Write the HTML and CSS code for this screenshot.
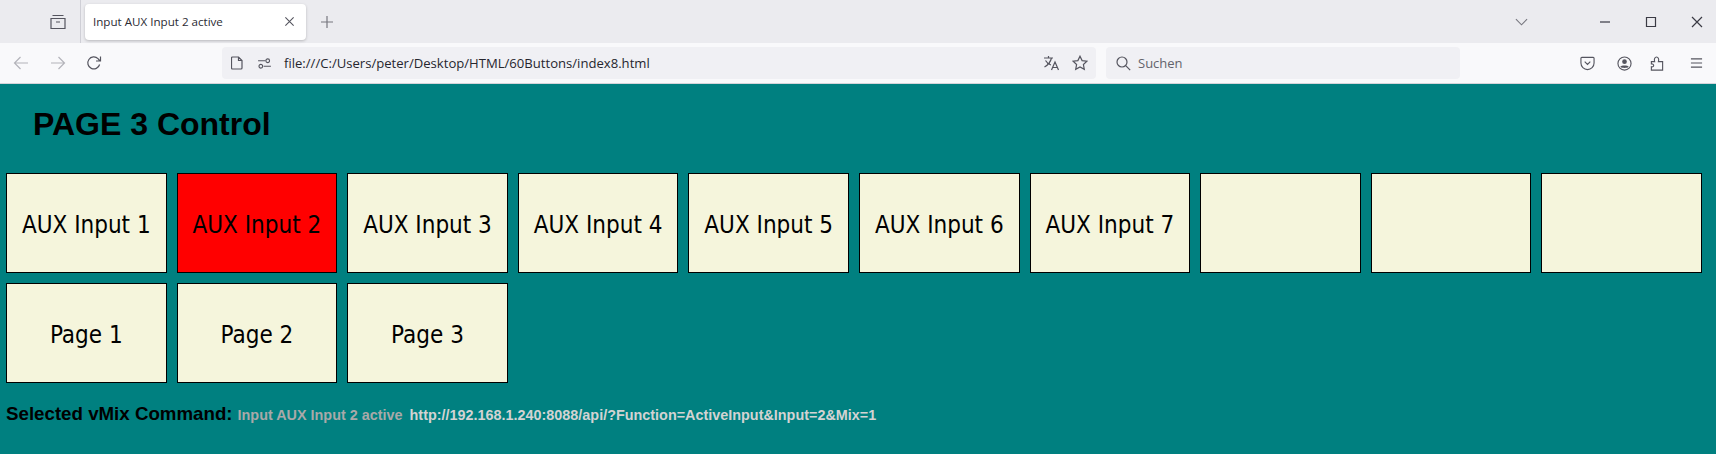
FILE: index.html
```html
<!DOCTYPE html>
<html lang="de">
<head>
<meta charset="utf-8">
<title>Input AUX Input 2 active</title>
<link rel="stylesheet" href="styles.css">
</head>
<body>
<header class="browser">
  <div class="tabstrip">
    <svg class="ico archive" viewBox="0 0 16 16"><path d="M2.5 1.5h11M1 4.5h14v10H1zM6 8h4"/></svg>
    <div class="sep"></div>
    <div class="tab">
      <span class="tab-title">Input AUX Input 2 active</span>
      <svg class="ico tab-close" viewBox="0 0 12 12"><path d="M1.5 1.5l9 9M10.5 1.5l-9 9"/></svg>
    </div>
    <svg class="ico plus" viewBox="0 0 14 14"><path d="M7 1v12M1 7h12"/></svg>
    <div class="spacer"></div>
    <svg class="ico chevron" viewBox="0 0 14 8"><path d="M1 1l6 6 6-6"/></svg>
    <svg class="ico win win-min" viewBox="0 0 12 12"><path d="M1 6h10"/></svg>
    <svg class="ico win win-max" viewBox="0 0 12 12"><path d="M1.5 1.5h9v9h-9z"/></svg>
    <svg class="ico win win-close" viewBox="0 0 12 12"><path d="M1 1l10 10M11 1L1 11"/></svg>
  </div>
  <div class="toolbar">
    <svg class="ico nav back" viewBox="0 0 16 16"><path d="M15 8H1.5M7.5 2l-6 6 6 6"/></svg>
    <svg class="ico nav forward" viewBox="0 0 16 16"><path d="M1 8h13.5M8.5 2l6 6-6 6"/></svg>
    <svg class="ico nav reload" viewBox="0 0 16 16"><path d="M13.6 9.5A6 6 0 1 1 12 3.6L14 6M14.5 1.5V6H10"/></svg>
    <div class="urlbar">
      <svg class="ico file" viewBox="0 0 12 14"><path d="M1.5 1h6l3.500 3.500v7.500a1 1 0 0 1-1 1h-8.500a1 1 0 0 1-1-1V2a1 1 0 0 1 1-1zM7.500 1v3.500H11"/></svg>
      <svg class="ico perm" viewBox="0 0 16 12"><circle cx="11.500" cy="3" r="2"/><circle cx="4" cy="9" r="2"/><path d="M1 3h8M7 9h8"/></svg>
      <span class="url">file:///C:/Users/peter/Desktop/HTML/60Buttons/index8.html</span>
      <div class="spacer"></div>
      <svg class="ico translate" viewBox="0 0 17 16"><path d="M1 3h9M5.500 1v2M8.500 3C7.500 7 5 10 1.500 12M2.500 5.500C4 8 6 9.500 8 10M8.500 15l3.500-8 3.500 8M9.700 12.500h4.800"/></svg>
      <svg class="ico star" viewBox="0 0 16 16"><path d="M8 1.200l2.100 4.400 4.800.6-3.500 3.300.9 4.800L8 12l-4.300 2.300.9-4.800L1.100 6.200l4.800-.6z"/></svg>
    </div>
    <div class="searchbar">
      <svg class="ico search" viewBox="0 0 15 15"><circle cx="6" cy="6" r="5"/><path d="M9.700 9.700l4.500 4.500"/></svg>
      <span class="search-text">Suchen</span>
    </div>
    <div class="spacer"></div>
    <svg class="ico tool pocket" viewBox="0 0 16 15"><path d="M2 1h12a1 1 0 0 1 1 1v5a7 7 0 0 1-14 0V2a1 1 0 0 1 1-1zM5 5.500L8 8.500l3-3"/></svg>
    <svg class="ico tool account" viewBox="0 0 16 16"><circle cx="8" cy="8" r="7"/><circle class="solid" cx="8" cy="6" r="2.500"/><path class="solid" d="M3.500 11.500c1-1.700 8-1.700 9 0-1 1.700-8 1.700-9 0z"/></svg>
    <svg class="ico tool puzzle" viewBox="0 0 14 16"><path d="M1 6h3.500C3.500 3 5 1 6.500 1S9.500 3 8.500 6H13v9H1v-3.500c3 .8 3.500-3.500 0-3z"/></svg>
    <svg class="ico tool menu" viewBox="0 0 14 12"><path d="M1 1.500h12M1 6h12M1 10.500h12"/></svg>
  </div>
</header>
<main class="page">
  <h1 class="heading">PAGE 3 Control</h1>
  <div class="grid">
    <button class="key">AUX Input 1</button>
    <button class="key active">AUX Input 2</button>
    <button class="key">AUX Input 3</button>
    <button class="key">AUX Input 4</button>
    <button class="key">AUX Input 5</button>
    <button class="key">AUX Input 6</button>
    <button class="key">AUX Input 7</button>
    <button class="key"></button>
    <button class="key"></button>
    <button class="key"></button>
    <button class="key">Page 1</button>
    <button class="key">Page 2</button>
    <button class="key">Page 3</button>
  </div>
  <p class="status">
    <span class="status-label">Selected vMix Command:</span>
    <span class="status-name">Input AUX Input 2 active</span>
    <span class="status-url">http://192.168.1.240:8088/api/?Function=ActiveInput&amp;Input=2&amp;Mix=1</span>
  </p>
</main>
</body>
</html>
```
FILE: styles.css
```css
* { box-sizing: border-box; }
html, body { margin: 0; height: 100%; overflow: hidden; }
body { background: #008080; display: flex; flex-direction: column; font-family: "Liberation Sans", Arial, sans-serif; }
.browser { flex: none; font-family: "Open Sans", "Noto Sans", sans-serif; color: #3a3a44; }
.spacer { flex: 1; }
.ico { display: block; flex: none; fill: none; stroke: #55555f; stroke-width: 1.2; }
.ico .solid { fill: #55555f; stroke: none; }

.tabstrip { height: 43px; background: #ebebef; display: flex; align-items: center; }
.archive { width: 16px; height: 16px; margin-left: 50px; }
.sep { width: 1px; height: 43px; background: #cfcfd6; margin-left: 14px; }
.tab { width: 221px; height: 36px; margin-left: 4px; background: #fff; border-radius: 4px; box-shadow: 0 1px 3px rgba(0,0,0,.22); display: flex; align-items: center; padding: 0 11px 0 8px; justify-content: space-between; }
.tab-title { font-size: 11.6px; white-space: nowrap; color: #2b2b33; }
.tab-close { width: 11px; height: 11px; }
.plus { width: 14px; height: 14px; margin-left: 14px; stroke: #77777f; }
.chevron { width: 13px; height: 8px; stroke: #77777f; }
.win { width: 12px; height: 12px; stroke: #3a3a44; }
.win-min { margin-left: 71px; }
.win-max { margin-left: 34px; }
.win-close { margin: 0 13px 0 34px; }

.toolbar { height: 41px; background: #f9f9fb; border-bottom: 1px solid #d4d4da; display: flex; align-items: center; }
.nav { width: 16px; height: 16px; }
.back { margin-left: 13px; stroke: #b4b4ba; }
.forward { margin-left: 21px; stroke: #b4b4ba; }
.reload { margin-left: 20px; }
.urlbar { width: 874px; height: 32px; margin-left: 120px; background: #f0f0f4; border-radius: 4px; display: flex; align-items: center; }
.file { width: 12px; height: 14px; margin-left: 9px; }
.perm { width: 15px; height: 11px; margin-left: 14px; }
.url { margin-left: 12px; font-size: 13.1px; white-space: nowrap; color: #26262e; }
.translate { width: 17px; height: 16px; }
.star { width: 16px; height: 16px; margin: 0 8px 0 12px; }
.searchbar { width: 354px; height: 32px; margin-left: 10px; background: #f0f0f4; border-radius: 4px; display: flex; align-items: center; }
.search { width: 15px; height: 15px; margin-left: 10px; }
.search-text { margin-left: 7px; font-size: 13px; color: #63636b; }
.tool { width: 15px; height: 15px; }
.pocket { margin-right: 22px; }
.account { margin-right: 18px; }
.puzzle { width: 14px; margin-right: 26px; }
.menu { width: 13px; height: 12px; margin-right: 13px; }

.page { flex: 1; color: #000; }
.heading { margin: 0; padding: 22px 0 0 33px; height: 89px; font-size: 32px; line-height: 37px; font-weight: bold; }
.grid { display: grid; grid-template-columns: repeat(10, 1fr); grid-auto-rows: 100px; gap: 10px; margin: 0 14px 0 6px; }
.key { margin: 0; padding: 4px 0 0; background: #f5f5dc; border: 1px solid #000; border-radius: 0; color: #000; font-family: "DejaVu Sans Condensed", "DejaVu Sans", sans-serif; font-size: 24px; }
.active { background: #f00; }
.status { margin: 20px 0 0 6px; display: flex; align-items: baseline; font-weight: bold; white-space: nowrap; }
.status-label { font-size: 18.72px; }
.status-name { font-size: 14.4px; color: #a9a9a9; margin-left: 5px; }
.status-url { font-size: 14.4px; color: #d3d3d3; margin-left: 7px; }
```
